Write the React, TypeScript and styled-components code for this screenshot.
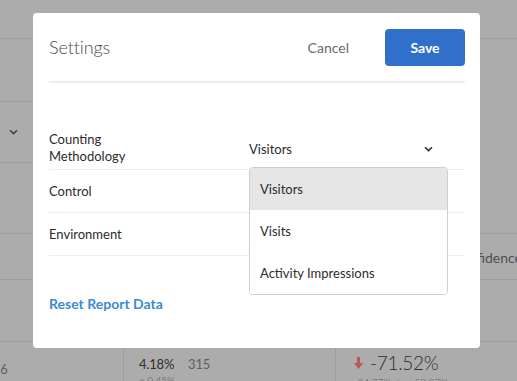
import { createGlobalStyle } from "styled-components";
import styled from "styled-components";

const GlobalStyle = createGlobalStyle`
  html, body {
    margin: 0;
    padding: 0;
    overflow: hidden;
  }
  body {
    font-family: Lato, "Open Sans", sans-serif;
    color: #2c2c2c;
  }
`;

// page behind the dialog
const Page = styled.div`
  position: relative;
  width: 100vw;
  height: 100vh;
  background: #acacac;
  overflow: hidden;
`;

const BgRow = styled.div<{ $height: number; $line: "full" | "left" }>`
  position: relative;
  height: ${(p) => p.$height}px;
  display: flex;
  align-items: center;
  &::after {
    content: "";
    position: absolute;
    left: 0;
    bottom: 0;
    height: 1px;
    width: ${(p) => (p.$line === "full" ? "100%" : "40px")};
    background: #9d9d9d;
  }
`;

const BgChevron = styled.svg`
  margin-left: 9px;
  margin-top: -2px;
`;

const BgHeaderText = styled.span`
  margin-left: auto;
  margin-right: -5px;
  font-size: 14px;
  color: #505050;
`;

const BgGrid = styled.div`
  display: grid;
  grid-template-columns: 123px 212px 1fr;
  height: 40px;
`;

const BgCell = styled.div<{ $pad: number; $top: number }>`
  padding: ${(p) => p.$top}px 0 0 ${(p) => p.$pad}px;
  border-left: 1px solid #9d9d9d;
  &:first-child {
    border-left: 0;
  }
`;

const BgLine = styled.div`
  display: flex;
  align-items: baseline;
  gap: 14px;
  white-space: nowrap;
`;

const BgValue = styled.span<{ $big?: boolean; $muted?: boolean }>`
  font-size: ${(p) => (p.$big ? "19px" : "13px")};
  font-weight: ${(p) => (p.$big ? 300 : 400)};
  color: ${(p) => (p.$muted ? "#5f5f5f" : "#2e2e2e")};
  letter-spacing: ${(p) => (p.$big ? "-0.3px" : "-0.2px")};
`;

const BgSub = styled.div`
  margin-top: 2px;
  font-size: 10px;
  color: #7a7a7a;
  white-space: nowrap;
`;

const DownArrow = styled.svg`
  align-self: center;
  margin-right: -7px;
`;

// dialog
const Dialog = styled.div`
  position: absolute;
  left: 33px;
  top: 13px;
  width: 447px;
  height: 335px;
  box-sizing: border-box;
  padding: 0 15px 0 16px;
  background: #ffffff;
  border-radius: 4px;
`;

const Header = styled.div`
  height: 68px;
  display: flex;
  align-items: center;
  border-bottom: 2px solid #ededed;
`;

const Title = styled.h2`
  margin: 0;
  font-size: 18px;
  font-weight: 300;
  color: #4b4b4b;
  letter-spacing: -0.1px;
`;

const Actions = styled.div`
  margin-left: auto;
  display: flex;
  align-items: center;
  gap: 36px;
`;

const TextButton = styled.button`
  border: 0;
  background: none;
  padding: 0;
  font-family: inherit;
  font-size: 14px;
  color: #6b6b6b;
  cursor: pointer;
`;

const PrimaryButton = styled.button`
  width: 80px;
  height: 37px;
  border: 0;
  border-radius: 4px;
  background: #3070cb;
  color: #ffffff;
  font-family: inherit;
  font-size: 14px;
  font-weight: 700;
  cursor: pointer;
`;

const Body = styled.div`
  padding-top: 44px;
`;

const FieldRow = styled.div`
  display: grid;
  grid-template-columns: 200px 199px;
  align-items: center;
  min-height: 42px;
  border-bottom: 1px solid #eeeeee;
`;

const Label = styled.div`
  font-size: 13px;
  line-height: 17px;
  color: #2c2c2c;
`;

const Select = styled.div`
  position: relative;
  height: 36px;
  display: flex;
  align-items: center;
  justify-content: space-between;
  padding-right: 15px;
  font-size: 13px;
  color: #2c2c2c;
  margin-top: 1px;
`;

const Menu = styled.ul`
  position: absolute;
  left: 0;
  right: 0;
  top: 100%;
  margin: 0;
  padding: 0;
  list-style: none;
  background: #ffffff;
  border: 1px solid #cfcfcf;
  border-radius: 4px;
  overflow: hidden;
  z-index: 2;
`;

const MenuItem = styled.li<{ $active?: boolean }>`
  height: 42px;
  display: flex;
  align-items: center;
  padding-left: 10px;
  font-size: 13px;
  color: #2c2c2c;
  background: ${(p) => (p.$active ? "#e6e6e6" : "#ffffff")};
`;

const ResetLink = styled.a`
  display: inline-block;
  margin-top: 39px;
  font-size: 14px;
  font-weight: 700;
  color: #3d8ad0;
  cursor: pointer;
`;

const Chevron = ({ color = "#2f2f2f" }: { color?: string }) => (
  <svg width="9" height="6" viewBox="0 0 9 6">
    <path d="M1 1.2 L4.5 4.6 L8 1.2" fill="none" stroke={color} strokeWidth="1.6" />
  </svg>
);

const fields = ["Control", "Environment"];
const options = ["Visitors", "Visits", "Activity Impressions"];

export default function App() {
  return (
    <>
      <GlobalStyle />
      <Page>
        <BgRow $height={39} $line="full" />
        <BgRow $height={63} $line="left" />
        <BgRow $height={61} $line="left">
          <BgChevron width="9" height="6" viewBox="0 0 9 6">
            <path d="M1 1.2 L4.5 4.6 L8 1.2" fill="none" stroke="#444" strokeWidth="1.6" />
          </BgChevron>
        </BgRow>
        <BgRow $height={71} $line="full" />
        <BgRow $height={46} $line="full">
          <BgHeaderText>Confidence</BgHeaderText>
        </BgRow>
        <BgRow $height={62} $line="full" />
        <BgGrid>
          <BgCell $pad={0} $top={16}>
            <BgValue $muted style={{ marginLeft: -7 }}>16</BgValue>
          </BgCell>
          <BgCell $pad={15} $top={14}>
            <BgLine>
              <BgValue>4.18%</BgValue>
              <BgValue $muted>315</BgValue>
            </BgLine>
            <BgSub>± 0.45%</BgSub>
          </BgCell>
          <BgCell $pad={18} $top={9}>
            <BgLine>
              <DownArrow width="9" height="12" viewBox="0 0 9 12">
                <path d="M3 0 H6 V6 H9 L4.5 12 L0 6 H3 Z" fill="#b55a55" />
              </DownArrow>
              <BgValue $big>-71.52%</BgValue>
            </BgLine>
            <BgSub>-84.77% &nbsp;to&nbsp; -58.27%</BgSub>
          </BgCell>
        </BgGrid>

        <Dialog>
          <Header>
            <Title>Settings</Title>
            <Actions>
              <TextButton>Cancel</TextButton>
              <PrimaryButton>Save</PrimaryButton>
            </Actions>
          </Header>
          <Body>
            <FieldRow>
              <Label>
                Counting
                <br />
                Methodology
              </Label>
              <Select>
                <span>Visitors</span>
                <Chevron />
                <Menu>
                  {options.map((o, i) => (
                    <MenuItem key={o} $active={i === 0}>
                      {o}
                    </MenuItem>
                  ))}
                </Menu>
              </Select>
            </FieldRow>
            {fields.map((f) => (
              <FieldRow key={f}>
                <Label>{f}</Label>
              </FieldRow>
            ))}
            <ResetLink>Reset Report Data</ResetLink>
          </Body>
        </Dialog>
      </Page>
    </>
  );
}
